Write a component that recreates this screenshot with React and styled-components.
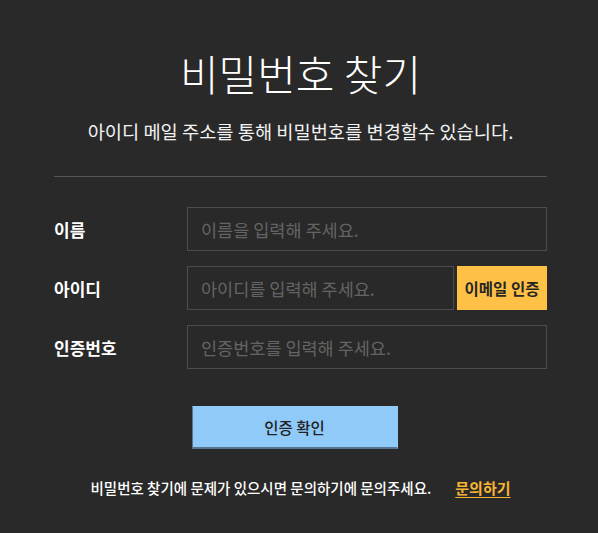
import React from 'react';
import styled, { createGlobalStyle } from 'styled-components';

const GlobalStyle = createGlobalStyle`
  body {
    margin: 0;
    background: #292929;
    font-family: 'Noto Sans CJK KR', 'Noto Sans', sans-serif;
  }
`;

const Page = styled.div`
  width: 493px;
  margin: 0 0 0 54px;
  padding-top: 49px;
`;

const Title = styled.h1`
  margin: 0;
  text-align: center;
  color: #ffffff;
  font-size: 42px;
  font-weight: 300;
  line-height: 48px;
`;

const Subtitle = styled.p`
  margin: 22px 0 0;
  text-align: center;
  color: #f2f2f2;
  font-size: 18.7px;
  font-weight: 400;
  line-height: 24px;
`;

const Divider = styled.hr`
  margin: 33px 0 30px;
  border: none;
  border-top: 1px solid #555555;
`;

const Form = styled.form`
  display: flex;
  flex-direction: column;
  gap: 15px;
`;

const Row = styled.div`
  display: grid;
  grid-template-columns: 133px 1fr;
  align-items: center;
`;

const Label = styled.label`
  color: #ffffff;
  font-size: 17px;
  font-weight: 700;
`;

const Field = styled.div`
  display: flex;
  gap: 3px;
`;

const Input = styled.input`
  flex: 1;
  min-width: 0;
  height: 44px;
  box-sizing: border-box;
  padding: 0 13px;
  background: #292929;
  border: 1px solid #4c4c4c;
  color: #ffffff;
  font-family: inherit;
  font-size: 17.5px;
  outline: none;

  &::placeholder {
    color: #646464;
  }
`;

const SideButton = styled.button`
  width: 90px;
  height: 44px;
  border: none;
  background: #ffc145;
  color: #262626;
  font-family: inherit;
  font-size: 15.5px;
  font-weight: 700;
  padding: 0;
`;

const Actions = styled.div`
  display: flex;
  justify-content: center;
  padding: 22px 12px 0 0;
`;

const ConfirmButton = styled.button`
  width: 206px;
  height: 43px;
  box-sizing: border-box;
  background: #90caf9;
  border: 1px solid #90caf9;
  border-left-color: #56748f;
  border-bottom: 2px solid #56748f;
  color: #222222;
  font-family: inherit;
  font-size: 15.5px;
  font-weight: 500;
`;

const Footer = styled.p`
  display: flex;
  justify-content: center;
  align-items: center;
  gap: 24px;
  margin: 28px 0 0;
  color: #ffffff;
  font-size: 14.5px;
  font-weight: 500;
`;

const HelpLink = styled.a`
  color: #f7b534;
  font-size: 15px;
  font-weight: 700;
  text-decoration: underline;
  text-underline-offset: 3px;
`;

export default function App() {
  return (
    <>
      <GlobalStyle />
      <Page>
        <Title>비밀번호 찾기</Title>
        <Subtitle>아이디 메일 주소를 통해 비밀번호를 변경할수 있습니다.</Subtitle>
        <Divider />
        <Form onSubmit={e => e.preventDefault()}>
          <Row>
            <Label>이름</Label>
            <Field>
              <Input placeholder="이름을 입력해 주세요." />
            </Field>
          </Row>
          <Row>
            <Label>아이디</Label>
            <Field>
              <Input placeholder="아이디를 입력해 주세요." />
              <SideButton type="button">이메일 인증</SideButton>
            </Field>
          </Row>
          <Row>
            <Label>인증번호</Label>
            <Field>
              <Input placeholder="인증번호를 입력해 주세요." />
            </Field>
          </Row>
          <Actions>
            <ConfirmButton type="submit">인증 확인</ConfirmButton>
          </Actions>
        </Form>
        <Footer>
          <span>비밀번호 찾기에 문제가 있으시면 문의하기에 문의주세요.</span>
          <HelpLink href="#">문의하기</HelpLink>
        </Footer>
      </Page>
    </>
  );
}
